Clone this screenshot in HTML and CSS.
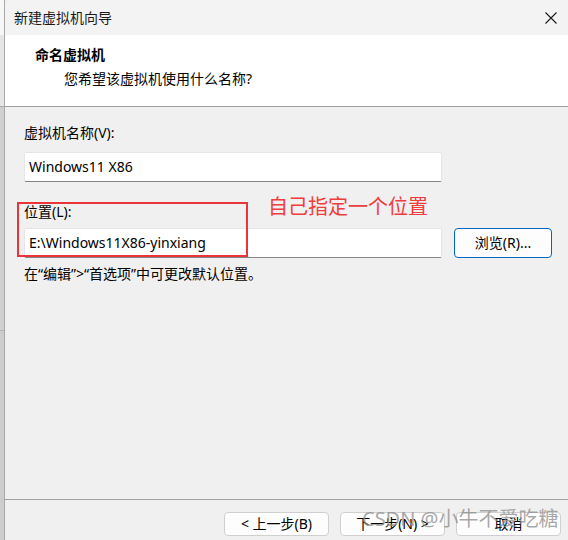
FILE: index.html
```html
<!DOCTYPE html>
<html lang="zh-CN">
<head>
<meta charset="utf-8">
<title>新建虚拟机向导</title>
<link rel="stylesheet" href="styles.css">
</head>
<body>
<div class="desktop">
  <div class="strip">
    <div class="strip-top"></div>
    <div class="strip-mid"></div>
    <div class="strip-low"></div>
    <div class="strip-bottom"></div>
  </div>
  <div class="window">
    <div class="titlebar">
      <span class="title">新建虚拟机向导</span>
      <svg class="close" width="12" height="12" viewBox="0 0 12 12"><path d="M0.5 0.5 L11.5 11.5 M11.5 0.5 L0.5 11.5" stroke="#1a1a1a" stroke-width="1.1" fill="none"/></svg>
    </div>
    <div class="header">
      <div class="h-title">命名虚拟机</div>
      <div class="h-sub">您希望该虚拟机使用什么名称?</div>
    </div>
    <div class="body">
      <div class="label l1">虚拟机名称(V):</div>
      <div class="input">Windows11 X86</div>
      <div class="label l2">位置(L):</div>
      <div class="row">
        <div class="input grow">E:\Windows11X86-yinxiang</div>
        <div class="btn primary">浏览(R)...</div>
      </div>
      <div class="note">在“编辑”&gt;“首选项”中可更改默认位置。</div>
      <div class="redbox"></div>
      <div class="annot">自己指定一个位置</div>
    </div>
    <div class="footer">
      <div class="btn">&lt; 上一步(B)</div>
      <div class="btn">下一步(N) &gt;</div>
      <div class="btn">取消</div>
      <div class="watermark">CSDN @小牛不爱吃糖</div>
    </div>
  </div>
</div>
</body>
</html>
```
FILE: styles.css
```css
* { box-sizing: border-box; }
html, body { margin: 0; padding: 0; }
body {
  width: 568px;
  height: 540px;
  overflow: hidden;
  font-family: "Segoe UI", "Noto Sans", "Noto Sans CJK SC", sans-serif;
  font-size: 14px;
  color: #000;
  background: #f0f0f0;
}
.desktop { display: flex; height: 540px; }
.strip {
  width: 5px;
  display: flex;
  flex-direction: column;
  border-right: 1px solid #a8a8a8;
}
.strip-top { height: 35px; background: #f7f7f7; }
.strip-mid { height: 72px; background: #e6e6e6; border-bottom: 1px solid #a8a8a8; }
.strip-low { height: 224px; background: #d0d0d0; border-bottom: 1px solid #b4b4b4; }
.strip-bottom { flex: 1; background: #cdcdcd; }
.window {
  flex: 1;
  display: flex;
  flex-direction: column;
  background: #f0f0f0;
}
.titlebar {
  height: 35px;
  background: #f3f3f3;
  border-top-left-radius: 7px;
  display: flex;
  align-items: center;
  justify-content: space-between;
  padding: 0 11px 0 9px;
}
.title { font-size: 14px; line-height: 20px; color: #1a1a1a; }
.close { display: block; margin-top: 1px; }
.header {
  height: 72px;
  background: #fff;
  border-bottom: 1px solid #a0a0a0;
  padding-top: 10px;
}
.h-title { font-weight: bold; padding-left: 30px; line-height: 20px; }
.h-sub { padding-left: 59px; line-height: 20px; margin-top: 4px; }
.body {
  flex: 1;
  position: relative;
  padding: 16px 0 0 19px;
  border-bottom: 1px solid #a0a0a0;
}
.label { line-height: 20px; }
.l1 { margin-bottom: 9px; }
.l2 { margin-top: 20px; margin-bottom: 6px; }
.input {
  width: 418px;
  height: 30px;
  background: #fff;
  border: 1px solid #e6e6e6;
  border-bottom: 1px solid #868686;
  border-radius: 2px;
  padding-left: 4px;
  line-height: 27px;
}
.row { display: flex; gap: 12px; align-items: flex-start; }
.btn {
  width: 105px;
  height: 24px;
  border: 1px solid #d0d0d0;
  border-radius: 4px;
  background: #fdfdfd;
  text-align: center;
  line-height: 21px;
}
.btn.primary {
  width: 98px;
  height: 30px;
  line-height: 27px;
  border: 1px solid #0067c0;
}
.note { margin-top: 6px; line-height: 20px; }
.redbox {
  position: absolute;
  left: 12px;
  top: 95px;
  width: 231px;
  height: 55px;
  border: 2px solid #e8343a;
}
.annot {
  position: absolute;
  left: 263px;
  top: 86px;
  font-size: 20px;
  line-height: 28px;
  color: #f03c3c;
}
.footer {
  height: 40px;
  position: relative;
  display: flex;
  justify-content: flex-end;
  gap: 11px;
  padding: 12px 7px 0 0;
}
.watermark {
  position: absolute;
  left: 357px;
  top: 5px;
  font-size: 20px;
  line-height: 28px;
  color: rgba(140, 140, 140, 0.75);
  white-space: nowrap;
}
```
